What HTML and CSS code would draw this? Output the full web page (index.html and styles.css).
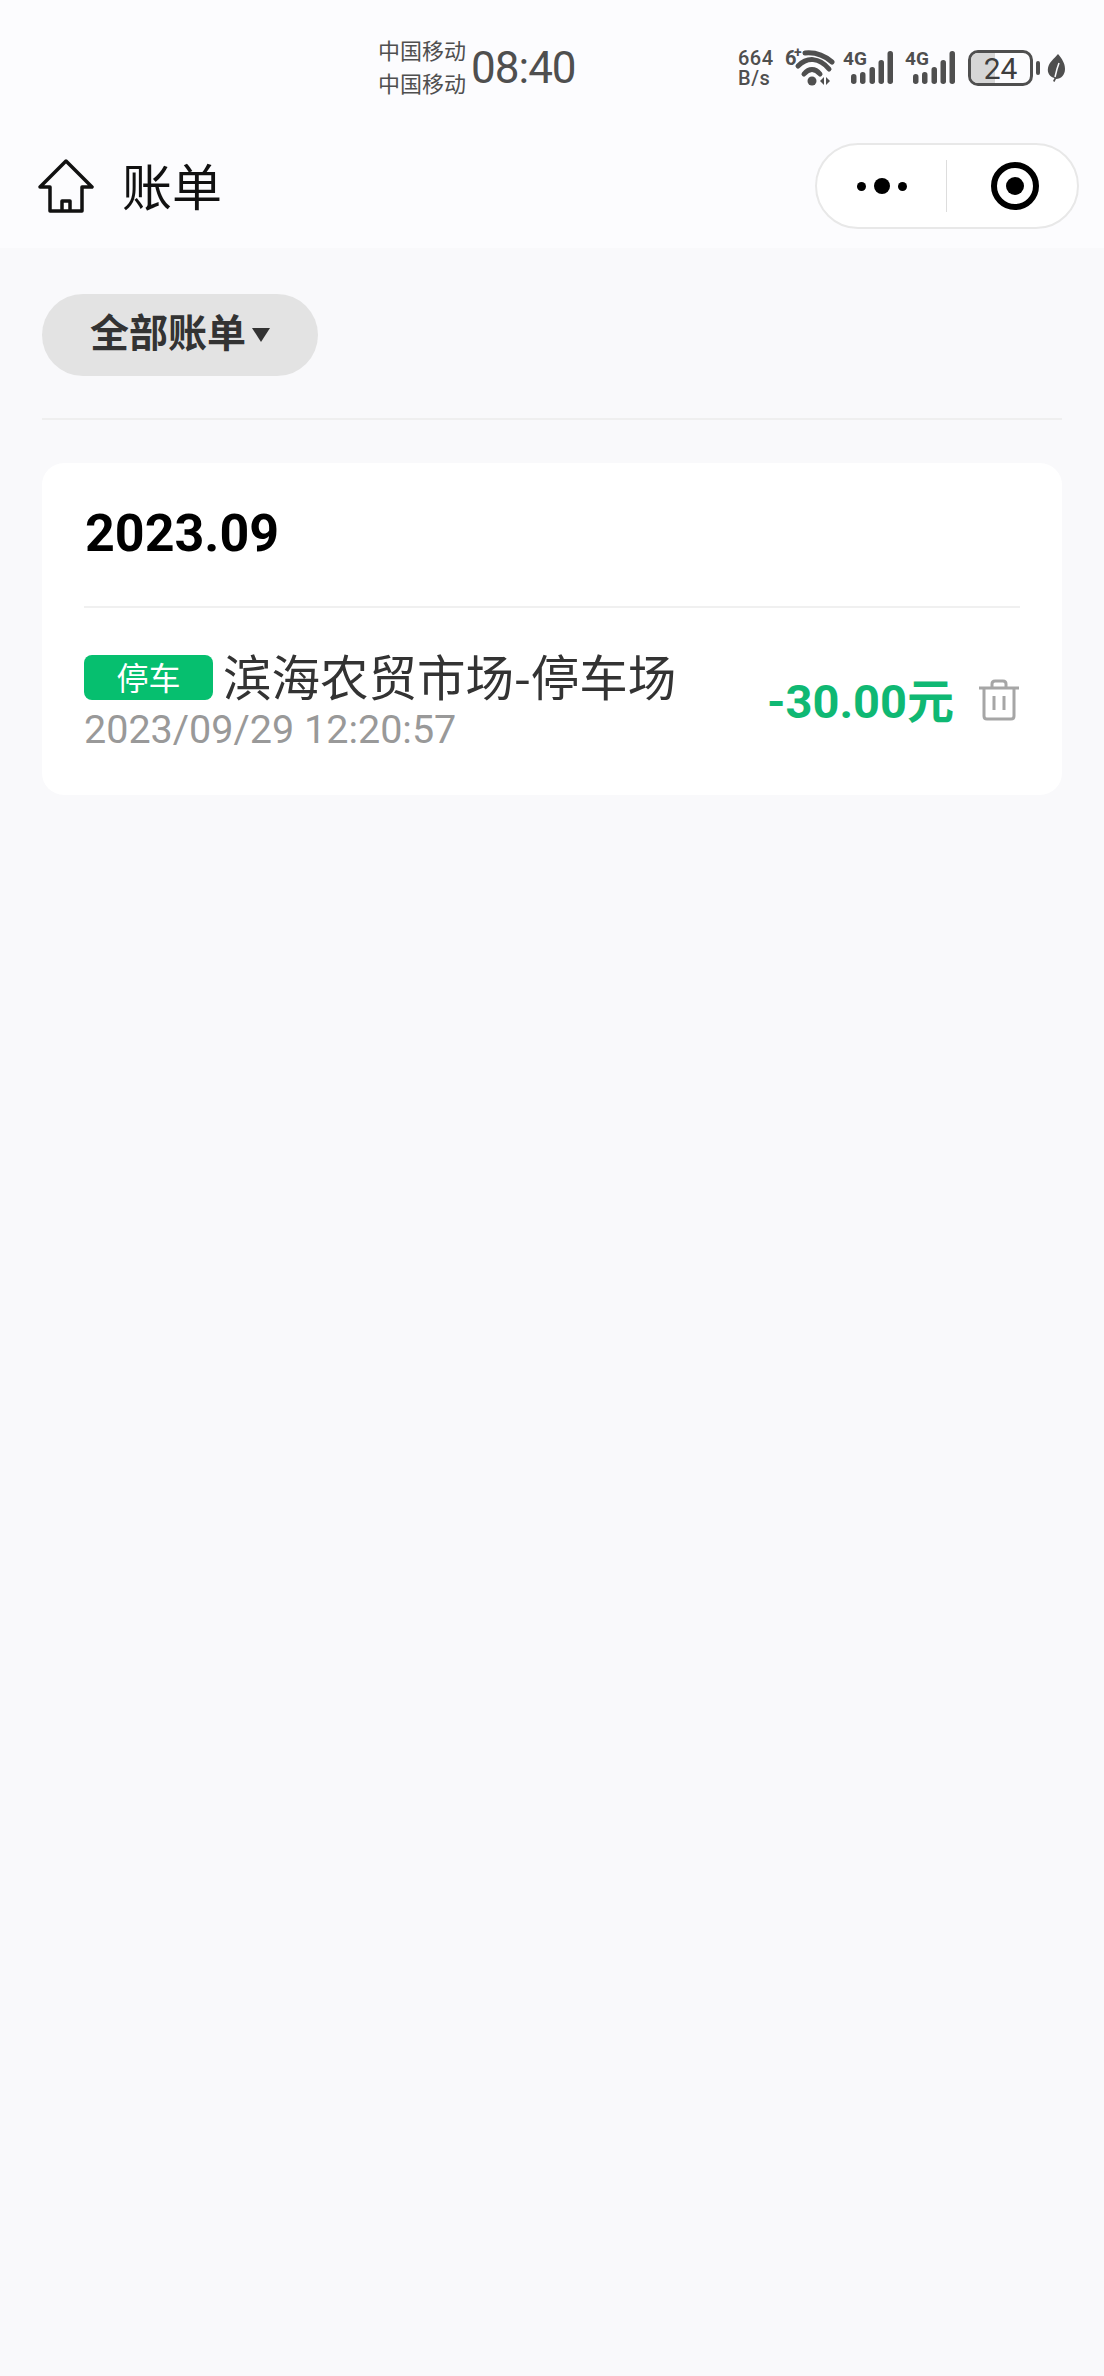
FILE: index.html
```html
<!DOCTYPE html>
<html lang="zh-CN">
<head>
  <meta charset="UTF-8">
  <meta name="viewport" content="width=device-width, initial-scale=1.0">
  <title>账单</title>
  <link rel="stylesheet" href="styles.css">
</head>
<body>
  <header class="top">
    <div class="status">
      <div class="carriers">
        <span>中国移动</span>
        <span>中国移动</span>
      </div>
      <div class="clock">08:40</div>
      <div class="status-icons">
        <div class="speed">
          <span>664</span>
          <span>B/s</span>
        </div>
        <svg class="wifi" width="50" height="48" viewBox="0 -4 50 48">
          <text x="0" y="17" class="sb-text sb-six">6</text>
          <text x="9" y="9" class="sb-text sb-plus">+</text>
          <path d="M20 5 C30 4 40 8 47 14" class="wifi-arc" />
          <path d="M13 18 C22 9 34 9 44 21" class="wifi-arc" />
          <path d="M19 26 C24 20 30 20 35 26" class="wifi-arc" />
          <circle cx="27" cy="33" r="4.500" fill="#4f4f4f" />
          <path d="M35 33 l4 -4 v8 z M41 29 l4 4 l-4 4 z" fill="#4f4f4f" />
        </svg>
        <svg class="signal" width="50" height="46" viewBox="0 -6 50 46">
          <text x="0" y="14" class="sb-text">4G</text>
          <rect x="8" y="23" width="5.500" height="10" rx="2.700" />
          <rect x="17" y="21" width="5.500" height="12" rx="2.700" />
          <rect x="26.500" y="16" width="5.500" height="17" rx="2.700" />
          <rect x="35.500" y="9" width="5.500" height="24" rx="2.700" />
          <rect x="44.500" y="0" width="5.500" height="33" rx="2.700" />
        </svg>
        <svg class="signal" width="50" height="46" viewBox="0 -6 50 46">
          <text x="0" y="14" class="sb-text">4G</text>
          <rect x="8" y="23" width="5.500" height="10" rx="2.700" />
          <rect x="17" y="21" width="5.500" height="12" rx="2.700" />
          <rect x="26.500" y="16" width="5.500" height="17" rx="2.700" />
          <rect x="35.500" y="9" width="5.500" height="24" rx="2.700" />
          <rect x="44.500" y="0" width="5.500" height="33" rx="2.700" />
        </svg>
        <div class="battery">
          <div class="battery-fill"></div>
          <span class="battery-num">24</span>
        </div>
        <div class="battery-nub"></div>
        <svg class="leaf" width="18" height="28" viewBox="0 0 18 28">
          <path d="M11 0 C15 5 18 9 18 15 C18 21 14 25 9 25 L7.500 28 L6 27 L7.500 24 C3 23 0 19 1 14 C2 8 7 5 11 0 Z" fill="#4f4f4f" />
          <path d="M8 23 L10 15 L12 9" fill="none" stroke="#fcfcfe" stroke-width="1.500" />
        </svg>
      </div>
    </div>
    <div class="nav">
      <svg class="home" width="56" height="54" viewBox="0 0 56 54">
        <path d="M28 2 L54 28 H44 V52 H12 V28 H2 Z M24 52 V42 H32 V52" fill="none" stroke="#111" stroke-width="3.500" stroke-linejoin="round" />
      </svg>
      <h1 class="nav-title">账单</h1>
      <div class="capsule">
        <div class="capsule-more">
          <i class="dot"></i>
          <i class="dot dot-big"></i>
          <i class="dot"></i>
        </div>
        <div class="capsule-line"></div>
        <div class="capsule-close">
          <div class="ring"></div>
        </div>
      </div>
    </div>
  </header>

  <main class="content">
    <button class="filter">全部账单<i class="caret"></i></button>
    <div class="filter-line"></div>

    <section class="card">
      <h2 class="month">2023.09</h2>
      <div class="bill">
        <div class="bill-info">
          <div class="bill-title">
            <span class="tag">停车</span>
            <span class="bill-name">滨海农贸市场-停车场</span>
          </div>
          <div class="bill-time">2023/09/29 12:20:57</div>
        </div>
        <div class="bill-amount">-30.00元</div>
        <svg class="trash" width="42" height="42" viewBox="0 0 42 42">
          <path d="M1 9 H41 M14 9 V5 Q14 2 17 2 H25 Q28 2 28 5 V9 M6 9 V37 Q6 40 9 40 H33 Q36 40 36 37 V9 M16 17 V31 M26 17 V31" fill="none" stroke="#a6a6a6" stroke-width="3" />
        </svg>
      </div>
    </section>
  </main>
</body>
</html>
```

FILE: styles.css
```css
* {
  box-sizing: border-box;
}
html, body {
  margin: 0;
  height: 100%;
}
body {
  background: #f9f9fb;
  font-family: "Noto Sans CJK SC", "Noto Sans", sans-serif;
  overflow: hidden;
}
.top {
  background: #fcfcfe;
  height: 248px;
}
.status {
  height: 116px;
  display: flex;
  align-items: center;
  padding: 36px 39px 0 378px;
  color: #4f4f4f;
}
.carriers {
  display: flex;
  flex-direction: column;
  font-size: 22px;
  line-height: 33px;
  margin-top: -20px;
}
.clock {
  font-family: Roboto, sans-serif;
  font-size: 44px;
  letter-spacing: -1px;
  width: 100px;
  margin-left: 5px;
  margin-top: -16px;
}
.status-icons {
  display: flex;
  align-items: center;
  margin-left: auto;
  margin-top: -16px;
}
.speed {
  display: flex;
  flex-direction: column;
  font-family: Roboto, sans-serif;
  font-size: 20px;
  letter-spacing: 0.5px;
  font-weight: 500;
  line-height: 20px;
  width: 47px;
}
.wifi {
  margin-right: 8px;
}
.wifi-arc {
  fill: none;
  stroke: #4f4f4f;
  stroke-width: 5;
  stroke-linecap: round;
}
.sb-text {
  font-family: Roboto, sans-serif;
  font-size: 19px;
  font-weight: 700;
  fill: #4f4f4f;
}
.sb-six {
  font-size: 20px;
}
.sb-plus {
  font-size: 14px;
}
.signal {
  margin-right: 12px;
  fill: #4f4f4f;
}
.battery {
  position: relative;
  width: 65px;
  height: 36px;
  margin-left: 1px;
  border: 3px solid #4f4f4f;
  border-radius: 10px;
  overflow: hidden;
  display: flex;
  align-items: center;
  justify-content: center;
}
.battery-fill {
  position: absolute;
  left: 0;
  top: 0;
  bottom: 0;
  width: 24px;
  background: #d6d6d6;
}
.battery-num {
  position: relative;
  font-family: Roboto, sans-serif;
  font-size: 30px;
  color: #3e3e3e;
}
.battery-nub {
  width: 4px;
  height: 14px;
  border-radius: 2px;
  background: #4f4f4f;
  margin: 0 7px 0 3px;
}
.nav {
  height: 136px;
  display: flex;
  align-items: center;
  padding: 0 25px 0 38px;
}
.home {
  flex: none;
  margin-top: 3px;
}
.nav-title {
  margin: 0 0 0 28px;
  font-size: 50px;
  font-weight: 400;
  color: #111;
}
.capsule {
  margin: 4px 0 0 auto;
  width: 264px;
  height: 86px;
  background: #fff;
  border: 2px solid #e8e8e8;
  border-radius: 43px;
  display: flex;
  align-items: center;
}
.capsule-more {
  width: 129px;
  display: flex;
  align-items: center;
  justify-content: center;
  gap: 8px;
}
.dot {
  width: 9px;
  height: 9px;
  border-radius: 50%;
  background: #000;
}
.dot-big {
  width: 16px;
  height: 16px;
}
.capsule-line {
  width: 1px;
  height: 52px;
  background: #ddd;
}
.capsule-close {
  flex: 1;
  display: flex;
  justify-content: center;
  padding-left: 5px;
}
.ring {
  width: 48px;
  height: 48px;
  border: 6px solid #000;
  border-radius: 50%;
  display: flex;
  align-items: center;
  justify-content: center;
}
.ring::after {
  content: "";
  width: 18px;
  height: 18px;
  border-radius: 50%;
  background: #000;
}
.content {
  padding: 46px 42px 0;
}
.filter {
  display: flex;
  align-items: center;
  width: 276px;
  height: 82px;
  padding: 0 0 10px 48px;
  border: 0;
  border-radius: 41px;
  background: #e3e3e3;
  color: #333;
  font-family: inherit;
  font-size: 39px;
  font-weight: 700;
}
.caret {
  width: 0;
  height: 0;
  margin: 10px 0 0 6px;
  border-left: 9px solid transparent;
  border-right: 9px solid transparent;
  border-top: 14px solid #333;
}
.filter-line {
  height: 2px;
  margin-top: 42px;
  background: #efefef;
}
.card {
  margin-top: 43px;
  height: 332px;
  padding: 0 42px;
  background: #fff;
  border-radius: 22px;
}
.month {
  height: 145px;
  margin: 0;
  padding: 0 0 2px 1px;
  border-bottom: 2px solid #f0f0f0;
  display: flex;
  align-items: center;
  font-family: Roboto, sans-serif;
  font-size: 52px;
  font-weight: 700;
  color: #000;
}
.bill {
  display: flex;
  align-items: center;
  padding-top: 37px;
}
.bill-info {
  flex: 1;
}
.bill-title {
  display: flex;
  align-items: center;
  height: 60px;
}
.tag {
  width: 129px;
  height: 45px;
  margin-top: 5px;
  background: #06bf6f;
  color: #fff;
  border-radius: 8px;
  font-size: 32px;
  line-height: 42px;
  text-align: center;
}
.bill-name {
  margin-left: 10px;
  font-size: 48.500px;
  line-height: 60px;
  color: #333;
}
.bill-time {
  font-family: Roboto, sans-serif;
  font-size: 39.500px;
  line-height: 50px;
  color: #999;
}
.bill-amount {
  font-family: Roboto, "Noto Sans CJK SC", sans-serif;
  font-size: 47px;
  font-weight: 700;
  color: #0fb873;
  margin: 0 24px 5px 0;
}
.trash {
  flex: none;
}
```
